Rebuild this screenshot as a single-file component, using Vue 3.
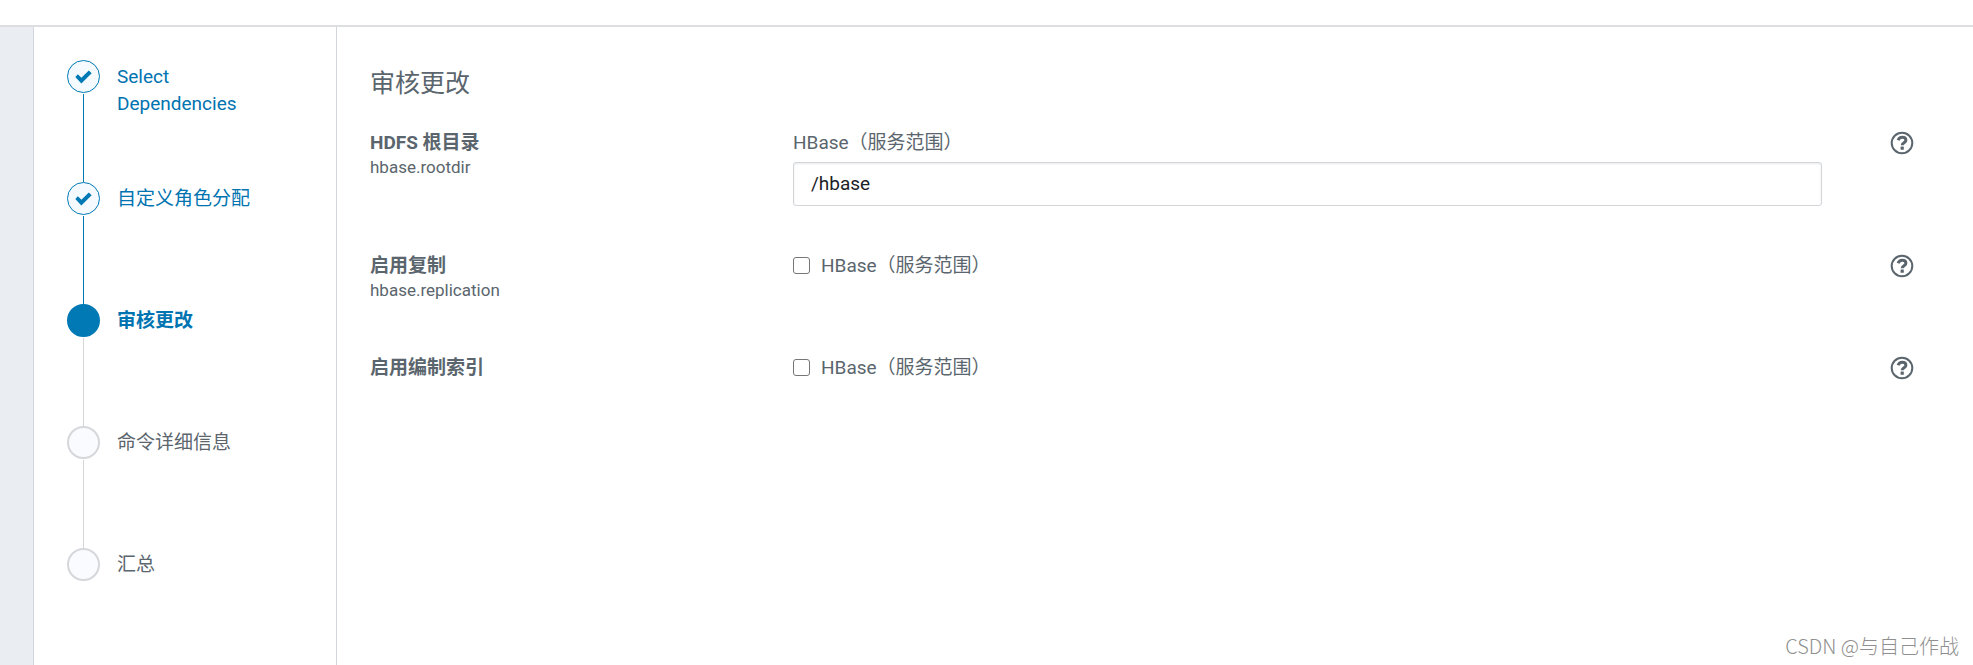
<script setup>
import { ref } from 'vue'

const steps = [
  { label: 'Select Dependencies', state: 'done' },
  { label: '自定义角色分配', state: 'done' },
  { label: '审核更改', state: 'current' },
  { label: '命令详细信息', state: 'todo' },
  { label: '汇总', state: 'todo' }
]

const rootDir = ref('/hbase')
const flags = ref([
  { id: 'replication', title: '启用复制', key: 'hbase.replication', on: false },
  { id: 'indexing', title: '启用编制索引', key: '', on: false }
])
</script>

<template>
  <div class="page">
    <header class="topbar"></header>
    <div class="body">
      <div class="rail"></div>
      <nav class="wizard">
        <ol class="steps">
          <li v-for="step in steps" :key="step.label" class="step" :class="step.state">
            <div class="track">
              <span class="dot">
                <svg v-if="step.state === 'done'" class="check" viewBox="0 0 16 13" aria-hidden="true">
                  <path d="M0.3 6.4 L2.7 4 L6 7.3 L13 0.3 L15.7 2.9 L6 12.6 Z" />
                </svg>
              </span>
            </div>
            <span class="step-label">{{ step.label }}</span>
          </li>
        </ol>
      </nav>
      <main class="content">
        <h1 class="title">审核更改</h1>
        <section class="row">
          <div class="name">
            <label class="name-title" for="rootdir">HDFS 根目录</label>
            <div class="key">hbase.rootdir</div>
          </div>
          <div class="value">
            <div class="scope">HBase（服务范围）</div>
            <input id="rootdir" v-model="rootDir" class="text" type="text" />
          </div>
          <button class="help" type="button" aria-label="帮助">
            <svg viewBox="0 0 24 24" aria-hidden="true">
              <circle cx="12" cy="12" r="10.3" />
              <path class="hook" d="M8.1 9.2 C8.9 7.2 10.3 6.3 12.1 6.3 C14.4 6.3 15.9 7.5 15.9 9.2 C15.9 11.7 12.2 11.7 12.2 14.2" />
              <rect x="10.6" y="15.6" width="3.2" height="3.2" rx="0.4" />
            </svg>
          </button>
        </section>
        <section v-for="flag in flags" :key="flag.id" class="row">
          <div class="name">
            <div class="name-title">{{ flag.title }}</div>
            <div v-if="flag.key" class="key">{{ flag.key }}</div>
          </div>
          <div class="value">
            <label class="scope option" :for="flag.id">
              <input :id="flag.id" v-model="flag.on" class="box" type="checkbox" />
              <span>HBase（服务范围）</span>
            </label>
          </div>
          <button class="help" type="button" aria-label="帮助">
            <svg viewBox="0 0 24 24" aria-hidden="true">
              <circle cx="12" cy="12" r="10.3" />
              <path class="hook" d="M8.1 9.2 C8.9 7.2 10.3 6.3 12.1 6.3 C14.4 6.3 15.9 7.5 15.9 9.2 C15.9 11.7 12.2 11.7 12.2 14.2" />
              <rect x="10.6" y="15.6" width="3.2" height="3.2" rx="0.4" />
            </svg>
          </button>
        </section>
      </main>
    </div>
    <div class="watermark">CSDN @与自己作战</div>
  </div>
</template>

<style>
body {
  margin: 0;
}
</style>

<style scoped>
.page {
  position: relative;
  display: flex;
  flex-direction: column;
  min-height: 100vh;
  background: #fff;
  color: #5a656d;
  font-family: Roboto, "Noto Sans CJK SC", sans-serif;
  font-size: 19px;
  line-height: 27px;
}

.topbar {
  box-sizing: border-box;
  height: 27px;
  border-bottom: 2px solid #dcdee1;
}

.body {
  display: flex;
  flex: 1;
}

.rail {
  flex: none;
  width: 33px;
  background: #eaeef2;
}

.wizard {
  flex: none;
  box-sizing: border-box;
  width: 304px;
  padding: 33px 33px 0;
  border-left: 1px solid #d3d6dc;
  border-right: 1px solid #d3d6dc;
}

.steps {
  margin: 0;
  padding: 0;
  list-style: none;
}

.step {
  display: flex;
  gap: 17px;
  min-height: 122px;
}

.track {
  flex: none;
  display: flex;
  flex-direction: column;
  align-items: center;
  width: 33px;
}

.track::after {
  content: "";
  flex: 1;
  width: 1px;
  margin-top: 1px;
  background: #d3d5d9;
}

.step:last-child .track::after {
  display: none;
}

.dot {
  display: flex;
  align-items: center;
  justify-content: center;
  box-sizing: border-box;
  width: 33px;
  height: 33px;
  border: 2px solid #d5d7db;
  border-radius: 50%;
  background: #fafbfe;
}

.check {
  width: 17px;
  height: 14px;
  fill: #0079b5;
}

.step-label {
  padding: 3px 17px 0 0;
}

.done .dot {
  border: 1px solid #0079b5;
  background: #f5faff;
}

.done .track::after {
  background: #0079b0;
}

.done .step-label,
.current .step-label {
  color: #0073b1;
}

.current .dot {
  border-color: #0079b5;
  background: #0079b5;
}

.current .step-label {
  font-weight: 700;
}

.content {
  flex: 1;
  padding: 40px 59px 0 33px;
}

.title {
  margin: 0 0 28px;
  font-size: 25px;
  font-weight: 400;
  line-height: 34px;
}

.row {
  display: grid;
  grid-template-columns: 423fr 1029fr 92fr;
  align-items: start;
  margin-bottom: 46px;
}

.name {
  padding-bottom: 7px;
}

.name-title {
  display: block;
  font-weight: 700;
}

.key {
  font-size: 17px;
  line-height: 22px;
}

.text {
  display: block;
  box-sizing: border-box;
  width: 100%;
  height: 44px;
  margin-top: 6px;
  padding: 0 17px 2px;
  border: 1px solid #d3d5d9;
  border-radius: 3px;
  background: #fff;
  box-shadow: inset 0 1px 2px #e6e8ea;
  color: #1b2227;
  font: inherit;
}

.option {
  display: flex;
  align-items: center;
  gap: 11px;
}

.box {
  flex: none;
  appearance: none;
  box-sizing: border-box;
  width: 17px;
  height: 17px;
  margin: 0;
  border: 1px solid #767676;
  border-radius: 3px;
  background: #fff;
}

.box:checked {
  background: #0079b5;
}

.help {
  justify-self: end;
  display: flex;
  margin: 2px 0 0;
  padding: 0;
  border: 0;
  background: none;
}

.help svg {
  width: 24px;
  height: 24px;
  fill: none;
  stroke: #5a656d;
  stroke-width: 2;
}

.help .hook {
  stroke-width: 3;
}

.help rect {
  fill: #5a656d;
  stroke: none;
}

.watermark {
  position: absolute;
  right: 14px;
  bottom: 11px;
  color: #8f8f8f;
  font-family: "Noto Sans CJK SC", sans-serif;
  font-size: 20px;
  font-weight: 300;
  line-height: 27px;
}
</style>
